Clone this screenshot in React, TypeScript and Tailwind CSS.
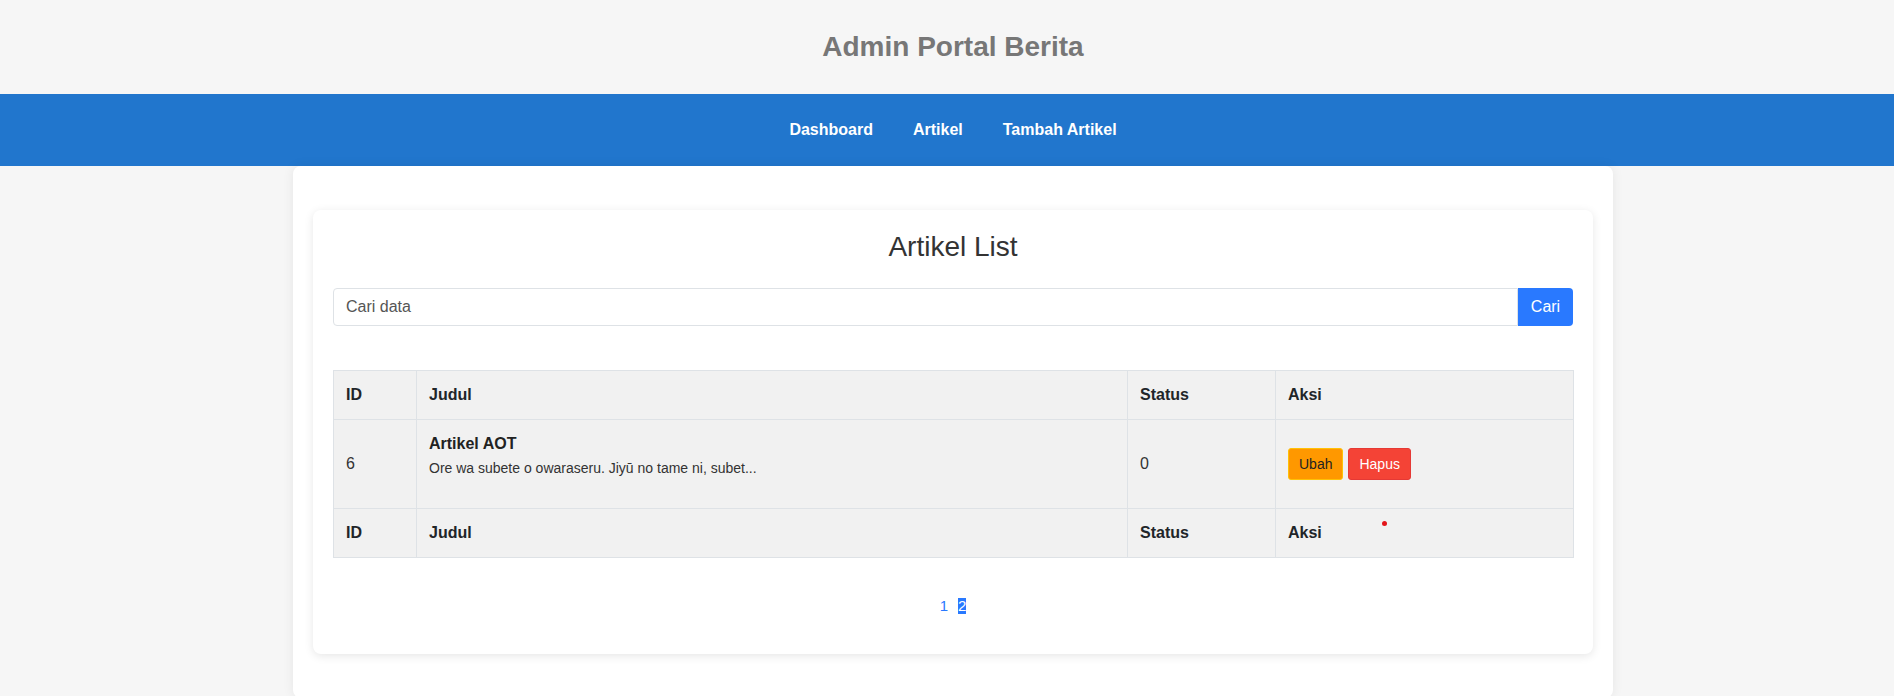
export default function App() {
  return (
    <div className="min-h-[696px] bg-[#f6f6f6] font-['Liberation_Sans',Arial,sans-serif]">
      <header className="h-[94px] flex items-center justify-center pl-3">
        <h1 className="text-[28px] font-bold text-[#777] leading-none">Admin Portal Berita</h1>
      </header>
      <nav className="h-[72px] bg-[#2176cd] flex items-center justify-center gap-10 pl-3">
        <a className="text-white font-bold text-base leading-6">Dashboard</a>
        <a className="text-white font-bold text-base leading-6">Artikel</a>
        <a className="text-white font-bold text-base leading-6">Tambah Artikel</a>
      </nav>
      <div className="pl-3">
        <main className="mx-auto w-[1320px] bg-white rounded-lg shadow-[0_0_12px_rgba(0,0,0,0.07)] px-5 pt-[44px] pb-[44px]">
          <section className="rounded-lg bg-white shadow-[0_2px_10px_rgba(0,0,0,0.1)] p-5">
            <h2 className="text-center text-[28px] leading-[34px] text-[#333] mb-6">Artikel List</h2>
            <div className="flex h-[38px]">
              <input
                placeholder="Cari data"
                className="flex-1 min-w-0 border border-[#dee2e6] rounded-l px-3 text-base text-[#555] placeholder:text-[#555] outline-none"
              />
              <button className="w-[55px] bg-[#2979ff] text-white text-base rounded-r">Cari</button>
            </div>
            <table className="mt-11 w-full table-fixed border-collapse bg-[#f1f1f1] text-base">
              <colgroup>
                <col className="w-[83px]" />
                <col className="w-[711px]" />
                <col className="w-[148px]" />
                <col className="w-[298px]" />
              </colgroup>
              <thead>
                <tr className="text-left text-[#212529]">
                  <th className="border border-[#dee2e6] px-3 py-3 leading-6 font-bold">ID</th>
                  <th className="border border-[#dee2e6] px-3 py-3 leading-6 font-bold">Judul</th>
                  <th className="border border-[#dee2e6] px-3 py-3 leading-6 font-bold">Status</th>
                  <th className="border border-[#dee2e6] px-3 py-3 leading-6 font-bold">Aksi</th>
                </tr>
              </thead>
              <tbody>
                <tr className="text-[#333]">
                  <td className="border border-[#dee2e6] px-3 py-3 align-middle leading-6">6</td>
                  <td className="border border-[#dee2e6] px-3 py-3 align-middle">
                    <div className="font-bold leading-6 text-[#222]">Artikel AOT</div>
                    <p className="text-sm leading-[21px] mt-[2px] mb-[17px] text-[#333]">
                      Ore wa subete o owaraseru. Jiyū no tame ni, subet...
                    </p>
                  </td>
                  <td className="border border-[#dee2e6] px-3 py-3 align-middle leading-6">0</td>
                  <td className="border border-[#dee2e6] px-3 py-3 align-middle">
                    <div className="flex gap-[5px]">
                      <button className="h-8 px-2.5 border border-[#ffc107] bg-[#ff9800] text-[#222] text-sm rounded-[3px]">
                        Ubah
                      </button>
                      <button className="h-8 px-2.5 border border-[#e53935] bg-[#f44336] text-white text-sm rounded-[3px]">
                        Hapus
                      </button>
                    </div>
                  </td>
                </tr>
              </tbody>
              <tfoot>
                <tr className="text-left text-[#212529]">
                  <th className="border border-[#dee2e6] px-3 py-3 leading-6 font-bold">ID</th>
                  <th className="border border-[#dee2e6] px-3 py-3 leading-6 font-bold">Judul</th>
                  <th className="border border-[#dee2e6] px-3 py-3 leading-6 font-bold">Status</th>
                  <th className="border border-[#dee2e6] px-3 py-3 leading-6 font-bold">
                    <div className="relative">
                      Aksi
                      <span className="absolute left-[94px] top-[0px] w-[5px] h-[5px] rounded-full bg-[#e3151a]" />
                    </div>
                  </th>
                </tr>
              </tfoot>
            </table>
            <div className="mt-10 mb-5 flex justify-center items-center gap-[10px] text-[15px]">
              <a className="text-[#2979ff] leading-4">1</a>
              <a className="bg-[#2979ff] text-white leading-4 h-4 inline-block">2</a>
            </div>
          </section>
        </main>
      </div>
    </div>
  );
}
